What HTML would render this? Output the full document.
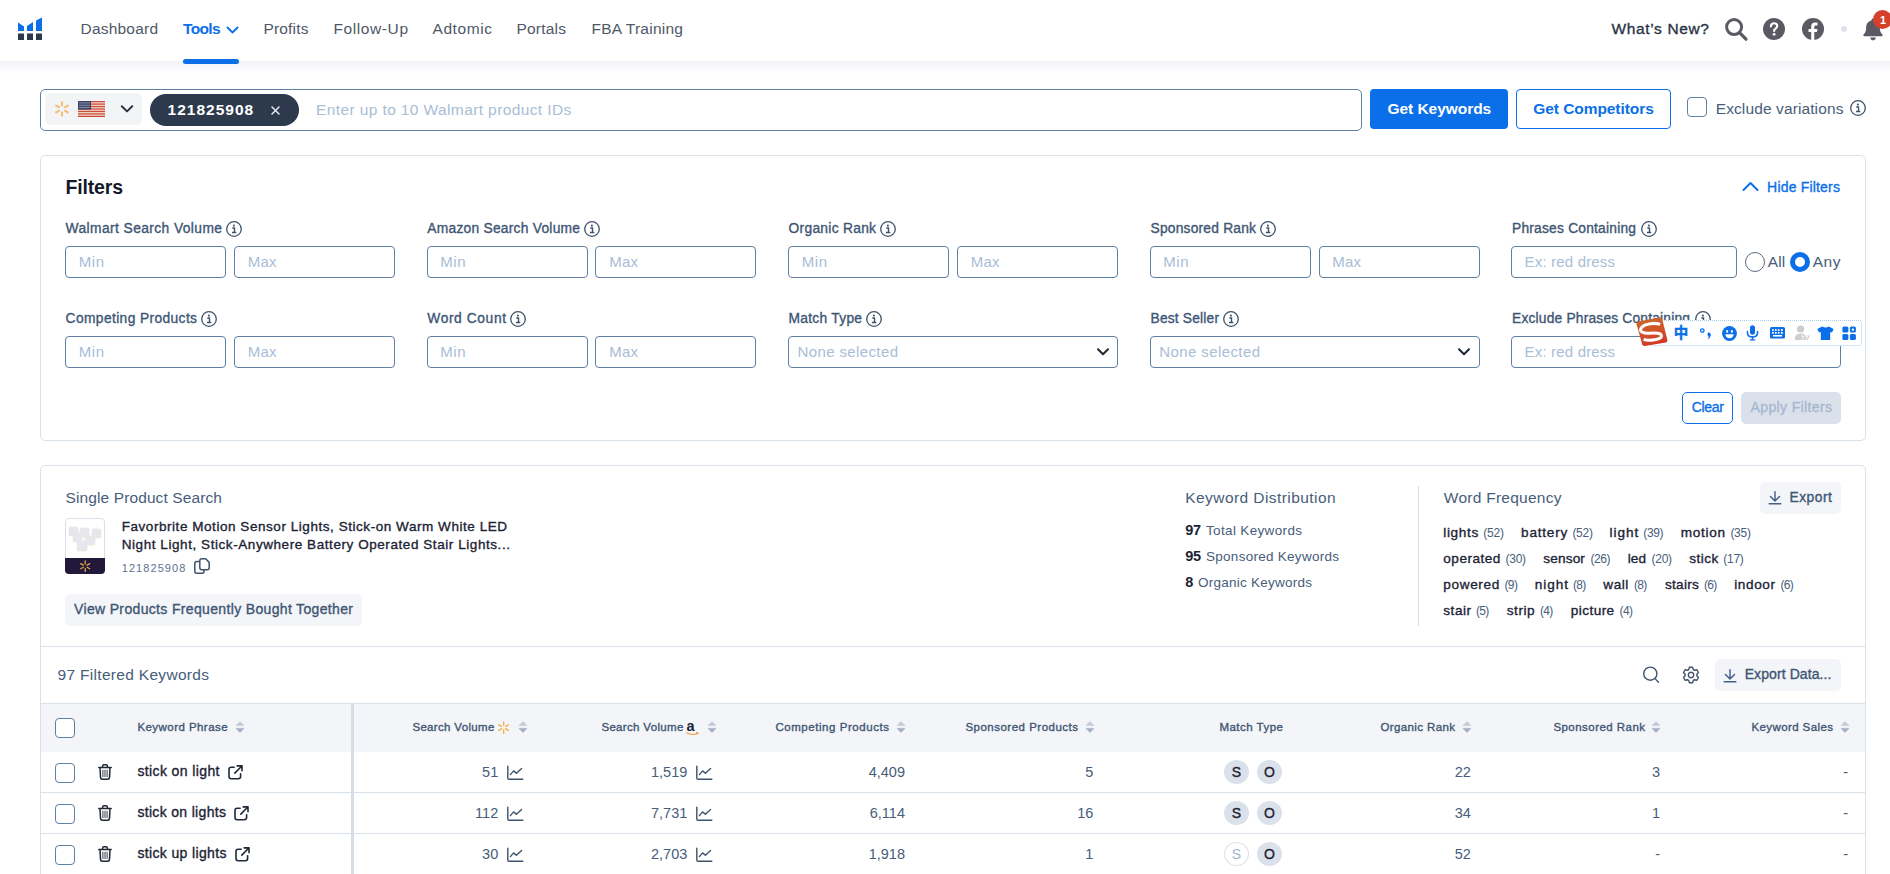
<!DOCTYPE html>
<html lang="en">
<head>
<meta charset="utf-8">
<title>Keyword Research</title>
<style>
html,body{margin:0;padding:0;background:#fff;}
body{width:1890px;height:874px;overflow:hidden;font-family:"Liberation Sans","Noto Sans CJK SC",sans-serif;}
#root{position:relative;width:1890px;height:874px;overflow:hidden;background:#fff;}
#root *{box-sizing:border-box;}
.t{position:absolute;white-space:nowrap;margin:0;padding:0;}
.a{position:absolute;}
.hdr{left:0;top:0;width:1890px;height:61px;background:#fff;}
.card{border:1px solid #d9e1ea;border-radius:5px;background:#fff;}
.inp{border:1px solid #5f7fa3;border-radius:4px;background:#fff;height:32px;}
.cb{border:1px solid #5f7fa3;border-radius:4px;background:#fff;width:20px;height:20px;}
.gbtn{background:#f3f5f8;border-radius:5px;}
.mt{width:25px;height:24px;border-radius:50%;background:#dbe1ea;}
.mto{width:25px;height:24px;border-radius:50%;background:#fff;border:1px solid #dbe1ea;}
.hl{height:1px;background:#d9e1ea;}
svg{position:absolute;overflow:visible;}

</style>
</head>
<body>
<div id="root">
<!-- header -->
<div class="a" style="left:0;top:61px;width:1890px;height:14px;background:linear-gradient(#f1f3f6 0%,#f4f5f8 25%,#fbfbfc 60%,#fff 100%);"></div>
<div class="a hdr"></div>
<div class="a" style="left:183px;top:59px;width:56px;height:5px;border-radius:3px;background:#0a6fe8;"></div>
<!-- logo -->
<svg style="left:18px;top:17px" width="24" height="24" viewBox="0 0 24 24">
 <rect x="0" y="16.5" width="6" height="6.5" fill="#2d3a4e"/>
 <rect x="9" y="16.5" width="6" height="6.5" fill="#2d3a4e"/>
 <rect x="18" y="16.5" width="6" height="6.5" fill="#2d3a4e"/>
 <polygon points="0,5.5 6,9.5 6,14 0,14" fill="#0a6fe8"/>
 <polygon points="9,9 15,5 15,14 9,14" fill="#0a6fe8"/>
 <polygon points="18,3.5 24,0.5 24,14 18,14" fill="#0a6fe8"/>
</svg>
<!-- tools chevron -->
<svg style="left:226.3px;top:25px" width="13" height="10" viewBox="0 0 13 10"><path d="M1.5 2.5 L6.5 7.5 L11.5 2.5" fill="none" stroke="#0a6fe8" stroke-width="1.8" stroke-linecap="round" stroke-linejoin="round"/></svg>
<!-- header right icons -->
<svg style="left:1724px;top:17px" width="26" height="26" viewBox="0 0 26 26"><circle cx="10.1" cy="10.1" r="7.5" fill="none" stroke="#5d5964" stroke-width="3"/><path d="M15.6 15.6 L22 22.2" stroke="#5d5964" stroke-width="3.2" stroke-linecap="round"/></svg>
<svg style="left:1763px;top:18px" width="22" height="22" viewBox="0 0 22 22"><circle cx="11" cy="11" r="11" fill="#5d5964"/><path d="M7.9 8.4 C7.9 6.4 9.3 5.3 11.1 5.3 C12.9 5.3 14.2 6.4 14.2 8 C14.2 9.6 13.2 10.1 12.2 10.9 C11.4 11.5 11.1 12 11.1 13" fill="none" stroke="#fff" stroke-width="2.1" stroke-linecap="round"/><circle cx="11.1" cy="16.3" r="1.4" fill="#fff"/></svg>
<svg style="left:1802px;top:18px" width="22" height="22" viewBox="0 0 22 22"><circle cx="11" cy="11" r="11" fill="#5d5964"/><path d="M12.3 22 V14 H14.9 L15.4 10.9 H12.3 V9 C12.3 8 12.7 7.4 13.9 7.4 H15.5 V4.7 C15 4.6 14.1 4.5 13.2 4.5 C10.6 4.5 9.2 6 9.2 8.6 V10.9 H6.5 V14 H9.2 V22 Z" fill="#fff"/></svg>
<div class="a" style="left:1840.5px;top:26px;width:6px;height:6px;border-radius:50%;background:#dde2ea;"></div>
<svg style="left:1862px;top:18px" width="22" height="23" viewBox="0 0 22 23"><path d="M11 0.5 C11.9 0.5 12.5 1.1 12.5 2 V2.6 C15.8 3.3 17.8 6 17.8 9.4 C17.8 13 18.8 15 20.4 16.5 C21 17.1 20.7 18.3 19.6 18.3 H2.4 C1.3 18.3 1 17.1 1.6 16.5 C3.2 15 4.2 13 4.2 9.4 C4.2 6 6.2 3.3 9.5 2.6 V2 C9.5 1.1 10.1 0.5 11 0.5 Z" fill="#5d5964"/><path d="M8.2 19.6 H13.8 C13.8 21.2 12.6 22.4 11 22.4 C9.4 22.4 8.2 21.2 8.2 19.6 Z" fill="#5d5964"/></svg>
<div class="a" style="left:1873.2px;top:10px;width:19px;height:19px;border-radius:50%;background:#d4402a;"></div>

<!-- search bar -->
<div class="a" style="left:40px;top:89px;width:1322px;height:42px;border:1px solid #5f7fa3;border-radius:5px;background:#fff;"></div>
<div class="a" style="left:45px;top:93px;width:97px;height:32px;border-radius:6px;background:#f3f4f6;"></div>
<svg style="left:53px;top:100px" width="18" height="18" viewBox="-9 -9 18 18"><g stroke="#f6bf78" stroke-width="2.1" stroke-linecap="round"><path d="M0 -6.8V-3.5"/><path d="M0 6.8V3.5"/><path d="M-5.9 -3.4L-3 -1.75"/><path d="M5.9 -3.4L3 -1.75"/><path d="M-5.9 3.4L-3 1.75"/><path d="M5.9 3.4L3 1.75"/></g></svg>
<svg style="left:78px;top:101px" width="27" height="16" viewBox="0 0 27 16"><rect width="27" height="16" fill="#f1e4d4"/><g fill="#cf4a3a"><rect y="0" width="27" height="1.3"/><rect y="2.45" width="27" height="1.3"/><rect y="4.9" width="27" height="1.3"/><rect y="7.35" width="27" height="1.3"/><rect y="9.8" width="27" height="1.3"/><rect y="12.25" width="27" height="1.3"/><rect y="14.7" width="27" height="1.3"/></g><rect width="13" height="8.6" fill="#3c4468"/><g fill="#8d93ad"><rect x="1" y="1.5" width="11" height="0.9"/><rect x="1" y="3.8" width="11" height="0.9"/><rect x="1" y="6.1" width="11" height="0.9"/></g></svg>
<svg style="left:120px;top:104px" width="14" height="10" viewBox="0 0 14 10"><path d="M1.8 2.2 L7 7.4 L12.2 2.2" fill="none" stroke="#2a3342" stroke-width="2" stroke-linecap="round" stroke-linejoin="round"/></svg>
<div class="a" style="left:150px;top:94px;width:149px;height:32px;border-radius:16px;background:#2d3a4e;"></div>
<svg style="left:271px;top:106px" width="9" height="9" viewBox="0 0 9 9"><path d="M1 1 L8 8 M8 1 L1 8" stroke="#e5e9ef" stroke-width="1.5" stroke-linecap="round"/></svg>
<div class="a" style="left:1370px;top:89px;width:138px;height:40px;border-radius:4px;background:#0a6fe8;"></div>
<div class="a" style="left:1516px;top:89px;width:155px;height:40px;border-radius:4px;background:#fff;border:1px solid #0a6fe8;"></div>
<div class="a cb" style="left:1687px;top:97px;"></div>

<!-- filters card -->
<div class="a card" style="left:40px;top:155px;width:1826px;height:286px;"></div>
<svg style="left:1742px;top:181px" width="17" height="11" viewBox="0 0 17 11"><path d="M1.5 9 L8.5 2 L15.5 9" fill="none" stroke="#0a6fe8" stroke-width="2" stroke-linecap="round" stroke-linejoin="round"/></svg>
<!-- row1 inputs -->
<div class="a inp" style="left:65px;top:246px;width:161px;"></div>
<div class="a inp" style="left:234px;top:246px;width:161px;"></div>
<div class="a inp" style="left:426.5px;top:246px;width:161px;"></div>
<div class="a inp" style="left:595px;top:246px;width:161px;"></div>
<div class="a inp" style="left:788px;top:246px;width:161px;"></div>
<div class="a inp" style="left:957px;top:246px;width:161px;"></div>
<div class="a inp" style="left:1149.5px;top:246px;width:161px;"></div>
<div class="a inp" style="left:1318.5px;top:246px;width:161px;"></div>
<div class="a inp" style="left:1511px;top:246px;width:226px;"></div>
<!-- radios -->
<div class="a" style="left:1745px;top:252px;width:20px;height:20px;border-radius:50%;border:1px solid #5c6b7e;background:#fff;"></div>
<div class="a" style="left:1790px;top:252px;width:20px;height:20px;border-radius:50%;border:5.5px solid #0a6fe8;background:#fff;"></div>
<!-- row2 inputs -->
<div class="a inp" style="left:65px;top:336px;width:161px;"></div>
<div class="a inp" style="left:234px;top:336px;width:161px;"></div>
<div class="a inp" style="left:426.5px;top:336px;width:161px;"></div>
<div class="a inp" style="left:595px;top:336px;width:161px;"></div>
<div class="a inp" style="left:788px;top:336px;width:330px;"></div>
<div class="a inp" style="left:1149.5px;top:336px;width:330px;"></div>
<div class="a inp" style="left:1511px;top:336px;width:330px;"></div>
<svg style="left:1096px;top:347px" width="14" height="10" viewBox="0 0 14 10"><path d="M2 2.2 L7 7.2 L12 2.2" fill="none" stroke="#1f2937" stroke-width="2" stroke-linecap="round" stroke-linejoin="round"/></svg>
<svg style="left:1457px;top:347px" width="14" height="10" viewBox="0 0 14 10"><path d="M2 2.2 L7 7.2 L12 2.2" fill="none" stroke="#1f2937" stroke-width="2" stroke-linecap="round" stroke-linejoin="round"/></svg>
<!-- buttons -->
<div class="a" style="left:1682px;top:392px;width:51px;height:32px;border-radius:5px;background:#fff;border:1px solid #0a6fe8;"></div>
<div class="a" style="left:1741px;top:392px;width:100px;height:32px;border-radius:5px;background:#dbe1ea;"></div>

<!-- results card -->
<div class="a card" style="left:40px;top:465px;width:1826px;height:430px;"></div>
<div class="a" style="left:65px;top:518px;width:40px;height:56px;border:1px solid #d9e0e9;border-radius:4px;background:#fff;"></div>
<div class="a" style="left:65px;top:558px;width:40px;height:16px;background:#22183a;border-radius:0 0 4px 4px;"></div>
<div class="a gbtn" style="left:65px;top:594px;width:297px;height:32px;"></div>
<div class="a" style="left:1418px;top:486px;width:1px;height:140px;background:#d9e1ea;"></div>
<div class="a gbtn" style="left:1760px;top:482px;width:81px;height:32px;"></div>
<div class="a hl" style="left:41px;top:646px;width:1824px;"></div>
<div class="a gbtn" style="left:1715px;top:659px;width:126px;height:32px;"></div>
<!-- table -->
<div class="a hl" style="left:41px;top:703px;width:1824px;"></div>
<div class="a" style="left:41px;top:704px;width:1824px;height:48px;background:#f3f5f8;"></div>
<div class="a hl" style="left:41px;top:792px;width:1824px;"></div>
<div class="a hl" style="left:41px;top:833px;width:1824px;"></div>
<div class="a" style="left:351px;top:704px;width:3px;height:170px;background:#d5dde7;"></div>
<div class="a cb" style="left:55px;top:718px;"></div>
<div class="a cb" style="left:55px;top:763px;"></div>
<div class="a cb" style="left:55px;top:804px;"></div>
<div class="a cb" style="left:55px;top:845px;"></div>
<div class="a mt" style="left:1224px;top:760px;"></div>
<div class="a mt" style="left:1257px;top:760px;"></div>
<div class="a mt" style="left:1224px;top:801px;"></div>
<div class="a mt" style="left:1257px;top:801px;"></div>
<div class="a mto" style="left:1224px;top:842px;"></div>
<div class="a mt" style="left:1257px;top:842px;"></div>

<svg style="left:224.8px;top:219.8px" width="18" height="18" viewBox="-9 -9 18 18"><circle r="7.3" fill="none" stroke="#3f526b" stroke-width="1.3"/><circle cx="-0.1" cy="-3.4" r="1.05" fill="#3f526b"/><path d="M-1.7 -1 H0.5 V3.4 M-2 3.5 H2.3" fill="none" stroke="#3f526b" stroke-width="1.4"/></svg>
<svg style="left:583px;top:219.8px" width="18" height="18" viewBox="-9 -9 18 18"><circle r="7.3" fill="none" stroke="#3f526b" stroke-width="1.3"/><circle cx="-0.1" cy="-3.4" r="1.05" fill="#3f526b"/><path d="M-1.7 -1 H0.5 V3.4 M-2 3.5 H2.3" fill="none" stroke="#3f526b" stroke-width="1.4"/></svg>
<svg style="left:879px;top:219.8px" width="18" height="18" viewBox="-9 -9 18 18"><circle r="7.3" fill="none" stroke="#3f526b" stroke-width="1.3"/><circle cx="-0.1" cy="-3.4" r="1.05" fill="#3f526b"/><path d="M-1.7 -1 H0.5 V3.4 M-2 3.5 H2.3" fill="none" stroke="#3f526b" stroke-width="1.4"/></svg>
<svg style="left:1259px;top:219.8px" width="18" height="18" viewBox="-9 -9 18 18"><circle r="7.3" fill="none" stroke="#3f526b" stroke-width="1.3"/><circle cx="-0.1" cy="-3.4" r="1.05" fill="#3f526b"/><path d="M-1.7 -1 H0.5 V3.4 M-2 3.5 H2.3" fill="none" stroke="#3f526b" stroke-width="1.4"/></svg>
<svg style="left:1640px;top:219.8px" width="18" height="18" viewBox="-9 -9 18 18"><circle r="7.3" fill="none" stroke="#3f526b" stroke-width="1.3"/><circle cx="-0.1" cy="-3.4" r="1.05" fill="#3f526b"/><path d="M-1.7 -1 H0.5 V3.4 M-2 3.5 H2.3" fill="none" stroke="#3f526b" stroke-width="1.4"/></svg>
<svg style="left:200px;top:309.8px" width="18" height="18" viewBox="-9 -9 18 18"><circle r="7.3" fill="none" stroke="#3f526b" stroke-width="1.3"/><circle cx="-0.1" cy="-3.4" r="1.05" fill="#3f526b"/><path d="M-1.7 -1 H0.5 V3.4 M-2 3.5 H2.3" fill="none" stroke="#3f526b" stroke-width="1.4"/></svg>
<svg style="left:509px;top:309.8px" width="18" height="18" viewBox="-9 -9 18 18"><circle r="7.3" fill="none" stroke="#3f526b" stroke-width="1.3"/><circle cx="-0.1" cy="-3.4" r="1.05" fill="#3f526b"/><path d="M-1.7 -1 H0.5 V3.4 M-2 3.5 H2.3" fill="none" stroke="#3f526b" stroke-width="1.4"/></svg>
<svg style="left:865px;top:309.8px" width="18" height="18" viewBox="-9 -9 18 18"><circle r="7.3" fill="none" stroke="#3f526b" stroke-width="1.3"/><circle cx="-0.1" cy="-3.4" r="1.05" fill="#3f526b"/><path d="M-1.7 -1 H0.5 V3.4 M-2 3.5 H2.3" fill="none" stroke="#3f526b" stroke-width="1.4"/></svg>
<svg style="left:1222px;top:309.8px" width="18" height="18" viewBox="-9 -9 18 18"><circle r="7.3" fill="none" stroke="#3f526b" stroke-width="1.3"/><circle cx="-0.1" cy="-3.4" r="1.05" fill="#3f526b"/><path d="M-1.7 -1 H0.5 V3.4 M-2 3.5 H2.3" fill="none" stroke="#3f526b" stroke-width="1.4"/></svg>
<svg style="left:1694px;top:309.8px" width="18" height="18" viewBox="-9 -9 18 18"><circle r="7.3" fill="none" stroke="#3f526b" stroke-width="1.3"/><circle cx="-0.1" cy="-3.4" r="1.05" fill="#3f526b"/><path d="M-1.7 -1 H0.5 V3.4 M-2 3.5 H2.3" fill="none" stroke="#3f526b" stroke-width="1.4"/></svg>
<svg style="left:1848.5px;top:99px" width="18" height="18" viewBox="-9 -9 18 18"><circle r="7.3" fill="none" stroke="#3f526b" stroke-width="1.3"/><circle cx="-0.1" cy="-3.4" r="1.05" fill="#3f526b"/><path d="M-1.7 -1 H0.5 V3.4 M-2 3.5 H2.3" fill="none" stroke="#3f526b" stroke-width="1.4"/></svg>
<svg style="left:235px;top:719.6px" width="10" height="14" viewBox="-5 -7 10 14"><path d="M0 -5.6 L3.9 -1.6 H-3.9 Z" fill="#c3cad7" stroke="#c3cad7" stroke-width="0.6" stroke-linejoin="round"/><path d="M0 5.4 L3.9 1.4 H-3.9 Z" fill="#a3aec4" stroke="#a3aec4" stroke-width="0.6" stroke-linejoin="round"/></svg>
<svg style="left:518px;top:719.6px" width="10" height="14" viewBox="-5 -7 10 14"><path d="M0 -5.6 L3.9 -1.6 H-3.9 Z" fill="#c3cad7" stroke="#c3cad7" stroke-width="0.6" stroke-linejoin="round"/><path d="M0 5.4 L3.9 1.4 H-3.9 Z" fill="#a3aec4" stroke="#a3aec4" stroke-width="0.6" stroke-linejoin="round"/></svg>
<svg style="left:707px;top:719.6px" width="10" height="14" viewBox="-5 -7 10 14"><path d="M0 -5.6 L3.9 -1.6 H-3.9 Z" fill="#c3cad7" stroke="#c3cad7" stroke-width="0.6" stroke-linejoin="round"/><path d="M0 5.4 L3.9 1.4 H-3.9 Z" fill="#a3aec4" stroke="#a3aec4" stroke-width="0.6" stroke-linejoin="round"/></svg>
<svg style="left:896px;top:719.6px" width="10" height="14" viewBox="-5 -7 10 14"><path d="M0 -5.6 L3.9 -1.6 H-3.9 Z" fill="#c3cad7" stroke="#c3cad7" stroke-width="0.6" stroke-linejoin="round"/><path d="M0 5.4 L3.9 1.4 H-3.9 Z" fill="#a3aec4" stroke="#a3aec4" stroke-width="0.6" stroke-linejoin="round"/></svg>
<svg style="left:1085px;top:719.6px" width="10" height="14" viewBox="-5 -7 10 14"><path d="M0 -5.6 L3.9 -1.6 H-3.9 Z" fill="#c3cad7" stroke="#c3cad7" stroke-width="0.6" stroke-linejoin="round"/><path d="M0 5.4 L3.9 1.4 H-3.9 Z" fill="#a3aec4" stroke="#a3aec4" stroke-width="0.6" stroke-linejoin="round"/></svg>
<svg style="left:1462px;top:719.6px" width="10" height="14" viewBox="-5 -7 10 14"><path d="M0 -5.6 L3.9 -1.6 H-3.9 Z" fill="#c3cad7" stroke="#c3cad7" stroke-width="0.6" stroke-linejoin="round"/><path d="M0 5.4 L3.9 1.4 H-3.9 Z" fill="#a3aec4" stroke="#a3aec4" stroke-width="0.6" stroke-linejoin="round"/></svg>
<svg style="left:1651px;top:719.6px" width="10" height="14" viewBox="-5 -7 10 14"><path d="M0 -5.6 L3.9 -1.6 H-3.9 Z" fill="#c3cad7" stroke="#c3cad7" stroke-width="0.6" stroke-linejoin="round"/><path d="M0 5.4 L3.9 1.4 H-3.9 Z" fill="#a3aec4" stroke="#a3aec4" stroke-width="0.6" stroke-linejoin="round"/></svg>
<svg style="left:1840px;top:719.6px" width="10" height="14" viewBox="-5 -7 10 14"><path d="M0 -5.6 L3.9 -1.6 H-3.9 Z" fill="#c3cad7" stroke="#c3cad7" stroke-width="0.6" stroke-linejoin="round"/><path d="M0 5.4 L3.9 1.4 H-3.9 Z" fill="#a3aec4" stroke="#a3aec4" stroke-width="0.6" stroke-linejoin="round"/></svg>
<svg style="left:507px;top:765.5px" width="16" height="14" viewBox="0 0 16 14"><path d="M0.8 0.3 V12 Q0.8 13.2 2 13.2 H15.8" fill="none" stroke="#3f526b" stroke-width="1.4" stroke-linecap="round"/><path d="M3.4 8.6 L6.6 4.9 L9.4 7.3 L14.6 2.6" fill="none" stroke="#3f526b" stroke-width="1.4" stroke-linecap="round" stroke-linejoin="round"/></svg>
<svg style="left:696px;top:765.5px" width="16" height="14" viewBox="0 0 16 14"><path d="M0.8 0.3 V12 Q0.8 13.2 2 13.2 H15.8" fill="none" stroke="#3f526b" stroke-width="1.4" stroke-linecap="round"/><path d="M3.4 8.6 L6.6 4.9 L9.4 7.3 L14.6 2.6" fill="none" stroke="#3f526b" stroke-width="1.4" stroke-linecap="round" stroke-linejoin="round"/></svg>
<svg style="left:507px;top:806.5px" width="16" height="14" viewBox="0 0 16 14"><path d="M0.8 0.3 V12 Q0.8 13.2 2 13.2 H15.8" fill="none" stroke="#3f526b" stroke-width="1.4" stroke-linecap="round"/><path d="M3.4 8.6 L6.6 4.9 L9.4 7.3 L14.6 2.6" fill="none" stroke="#3f526b" stroke-width="1.4" stroke-linecap="round" stroke-linejoin="round"/></svg>
<svg style="left:696px;top:806.5px" width="16" height="14" viewBox="0 0 16 14"><path d="M0.8 0.3 V12 Q0.8 13.2 2 13.2 H15.8" fill="none" stroke="#3f526b" stroke-width="1.4" stroke-linecap="round"/><path d="M3.4 8.6 L6.6 4.9 L9.4 7.3 L14.6 2.6" fill="none" stroke="#3f526b" stroke-width="1.4" stroke-linecap="round" stroke-linejoin="round"/></svg>
<svg style="left:507px;top:847.5px" width="16" height="14" viewBox="0 0 16 14"><path d="M0.8 0.3 V12 Q0.8 13.2 2 13.2 H15.8" fill="none" stroke="#3f526b" stroke-width="1.4" stroke-linecap="round"/><path d="M3.4 8.6 L6.6 4.9 L9.4 7.3 L14.6 2.6" fill="none" stroke="#3f526b" stroke-width="1.4" stroke-linecap="round" stroke-linejoin="round"/></svg>
<svg style="left:696px;top:847.5px" width="16" height="14" viewBox="0 0 16 14"><path d="M0.8 0.3 V12 Q0.8 13.2 2 13.2 H15.8" fill="none" stroke="#3f526b" stroke-width="1.4" stroke-linecap="round"/><path d="M3.4 8.6 L6.6 4.9 L9.4 7.3 L14.6 2.6" fill="none" stroke="#3f526b" stroke-width="1.4" stroke-linecap="round" stroke-linejoin="round"/></svg>
<svg style="left:98px;top:764px" width="14" height="16" viewBox="0 0 14 16"><path d="M0.8 3.4 H13.2 M4.6 3.2 V2.2 Q4.6 0.8 6 0.8 H8 Q9.4 0.8 9.4 2.2 V3.2 M2 3.6 L2.5 13.4 Q2.6 15.2 4.4 15.2 H9.6 Q11.4 15.2 11.5 13.4 L12 3.6" fill="none" stroke="#1f2937" stroke-width="1.5" stroke-linecap="round" stroke-linejoin="round"/><path d="M4.9 6.2 V12.6 M7 6.2 V12.6 M9.1 6.2 V12.6" stroke="#1f2937" stroke-width="0.9" stroke-linecap="round"/></svg>
<svg style="left:98px;top:805px" width="14" height="16" viewBox="0 0 14 16"><path d="M0.8 3.4 H13.2 M4.6 3.2 V2.2 Q4.6 0.8 6 0.8 H8 Q9.4 0.8 9.4 2.2 V3.2 M2 3.6 L2.5 13.4 Q2.6 15.2 4.4 15.2 H9.6 Q11.4 15.2 11.5 13.4 L12 3.6" fill="none" stroke="#1f2937" stroke-width="1.5" stroke-linecap="round" stroke-linejoin="round"/><path d="M4.9 6.2 V12.6 M7 6.2 V12.6 M9.1 6.2 V12.6" stroke="#1f2937" stroke-width="0.9" stroke-linecap="round"/></svg>
<svg style="left:98px;top:846px" width="14" height="16" viewBox="0 0 14 16"><path d="M0.8 3.4 H13.2 M4.6 3.2 V2.2 Q4.6 0.8 6 0.8 H8 Q9.4 0.8 9.4 2.2 V3.2 M2 3.6 L2.5 13.4 Q2.6 15.2 4.4 15.2 H9.6 Q11.4 15.2 11.5 13.4 L12 3.6" fill="none" stroke="#1f2937" stroke-width="1.5" stroke-linecap="round" stroke-linejoin="round"/><path d="M4.9 6.2 V12.6 M7 6.2 V12.6 M9.1 6.2 V12.6" stroke="#1f2937" stroke-width="0.9" stroke-linecap="round"/></svg>
<svg style="left:227.5px;top:764.5px" width="15" height="15" viewBox="0 0 15 15"><path d="M6.2 2.2 H3.2 Q1 2.2 1 4.4 V11.6 Q1 13.8 3.2 13.8 H10.4 Q12.6 13.8 12.6 11.6 V8.8" fill="none" stroke="#1f2937" stroke-width="1.6" stroke-linecap="round"/><path d="M9.2 0.9 H14 V5.7 M13.6 1.3 L6.8 8.1" fill="none" stroke="#1f2937" stroke-width="1.6" stroke-linecap="round" stroke-linejoin="round"/></svg>
<svg style="left:233.5px;top:805.5px" width="15" height="15" viewBox="0 0 15 15"><path d="M6.2 2.2 H3.2 Q1 2.2 1 4.4 V11.6 Q1 13.8 3.2 13.8 H10.4 Q12.6 13.8 12.6 11.6 V8.8" fill="none" stroke="#1f2937" stroke-width="1.6" stroke-linecap="round"/><path d="M9.2 0.9 H14 V5.7 M13.6 1.3 L6.8 8.1" fill="none" stroke="#1f2937" stroke-width="1.6" stroke-linecap="round" stroke-linejoin="round"/></svg>
<svg style="left:234.5px;top:846.5px" width="15" height="15" viewBox="0 0 15 15"><path d="M6.2 2.2 H3.2 Q1 2.2 1 4.4 V11.6 Q1 13.8 3.2 13.8 H10.4 Q12.6 13.8 12.6 11.6 V8.8" fill="none" stroke="#1f2937" stroke-width="1.6" stroke-linecap="round"/><path d="M9.2 0.9 H14 V5.7 M13.6 1.3 L6.8 8.1" fill="none" stroke="#1f2937" stroke-width="1.6" stroke-linecap="round" stroke-linejoin="round"/></svg>
<svg style="left:1723px;top:667.8px" width="14" height="15" viewBox="0 0 14 15"><path d="M7 1.6 V10.6 M2.5 6.4 L7 11 L11.5 6.4 M1.2 13.8 H12.8" fill="none" stroke="#45608a" stroke-width="1.45" stroke-linecap="round" stroke-linejoin="round"/></svg>
<svg style="left:1768px;top:490.4px" width="14" height="15" viewBox="0 0 14 15"><path d="M7 1.6 V10.6 M2.5 6.4 L7 11 L11.5 6.4 M1.2 13.8 H12.8" fill="none" stroke="#45608a" stroke-width="1.45" stroke-linecap="round" stroke-linejoin="round"/></svg>
<svg style="left:1642px;top:665px" width="18" height="19" viewBox="0 0 18 19"><circle cx="8.3" cy="8.7" r="6.6" fill="none" stroke="#3f526b" stroke-width="1.4"/><path d="M13.1 13.6 L16.5 17.3" stroke="#3f526b" stroke-width="1.4" stroke-linecap="round"/></svg>
<svg style="left:1681.9px;top:665.8px" width="18" height="18" viewBox="-9 -9 18 18"><path d="M-1.57 -7.74 L1.57 -7.74 L2.30 -5.43 L3.56 -4.71 L5.92 -5.23 L7.49 -2.51 L5.85 -0.73 L5.85 0.73 L7.49 2.51 L5.92 5.23 L3.56 4.71 L2.30 5.43 L1.57 7.74 L-1.57 7.74 L-2.30 5.43 L-3.56 4.71 L-5.92 5.23 L-7.49 2.51 L-5.85 0.73 L-5.85 -0.73 L-7.49 -2.51 L-5.92 -5.23 L-3.56 -4.71 L-2.30 -5.43 Z" fill="none" stroke="#3f526b" stroke-width="1.4" stroke-linejoin="round"/><circle r="2.7" fill="none" stroke="#3f526b" stroke-width="1.4"/></svg>
<svg style="left:194px;top:558px" width="16" height="16" viewBox="0 0 16 16"><path d="M4.6 3.6 H2.8 Q0.8 3.6 0.8 5.6 V13.2 Q0.8 15.2 2.8 15.2 H8 Q10 15.2 10 13.2 V12.4" fill="none" stroke="#3f526b" stroke-width="1.5" stroke-linecap="round"/><path d="M7.8 0.8 H11.6 L15.2 4.4 V9.8 Q15.2 11.8 13.2 11.8 H7.8 Q5.8 11.8 5.8 9.8 V2.8 Q5.8 0.8 7.8 0.8 Z" fill="none" stroke="#3f526b" stroke-width="1.5" stroke-linejoin="round"/></svg>
<svg style="left:496.59999999999997px;top:721.1999999999999px" width="13.2" height="13.2" viewBox="-6.6 -6.6 13.2 13.2"><path d="M0.00 -2.35L0.00 -5.60M2.04 -1.18L4.85 -2.80M2.04 1.18L4.85 2.80M0.00 2.35L0.00 5.60M-2.04 1.18L-4.85 2.80M-2.04 -1.18L-4.85 -2.80" stroke="#f7b457" stroke-width="1.5" stroke-linecap="round" fill="none"/></svg>
<svg style="left:78.8px;top:559.8px" width="12.4" height="12.4" viewBox="-6.2 -6.2 12.4 12.4"><path d="M0.00 -2.18L0.00 -5.20M1.89 -1.09L4.50 -2.60M1.89 1.09L4.50 2.60M0.00 2.18L0.00 5.20M-1.89 1.09L-4.50 2.60M-1.89 -1.09L-4.50 -2.60" stroke="#e3a552" stroke-width="1.3" stroke-linecap="round" fill="none"/></svg>
<svg style="left:686px;top:732px" width="13" height="4" viewBox="0 0 13 4"><path d="M0.8 0.8 Q6 4 11.6 1.2" fill="none" stroke="#f29b38" stroke-width="1.1" stroke-linecap="round"/><path d="M10.4 0.6 L12.2 0.8 L11.4 2.4" fill="none" stroke="#f29b38" stroke-width="0.9" stroke-linecap="round"/></svg>
<svg style="left:67px;top:525px" width="36" height="28" viewBox="0 0 36 28"><g fill="#e4e8ee" stroke="#f1e6d8" stroke-width="0.8"><rect x="2" y="2" width="9" height="9" rx="1.5"/><rect x="13" y="3" width="9" height="9" rx="1.5"/><rect x="25" y="4" width="9" height="9" rx="1.5"/><rect x="6" y="8" width="9" height="9" rx="1.5"/><rect x="18" y="11" width="10" height="9" rx="1.5"/><rect x="10" y="16" width="10" height="10" rx="1.5"/></g></svg>
<span class="t" style="top:19.00px;height:19px;line-height:19px;font-size:15.5px;color:#4f5867;letter-spacing:0.209px;left:80.5px;">Dashboard</span>
<span class="t" style="top:19.00px;height:19px;line-height:19px;font-size:15.5px;color:#0a6fe8;font-weight:700;letter-spacing:-0.672px;left:183.1px;">Tools</span>
<span class="t" style="top:19.00px;height:19px;line-height:19px;font-size:15.5px;color:#4f5867;letter-spacing:0.160px;left:263.5px;">Profits</span>
<span class="t" style="top:19.00px;height:19px;line-height:19px;font-size:15.5px;color:#4f5867;letter-spacing:0.592px;left:333.5px;">Follow-Up</span>
<span class="t" style="top:19.00px;height:19px;line-height:19px;font-size:15.5px;color:#4f5867;letter-spacing:0.583px;left:432.5px;">Adtomic</span>
<span class="t" style="top:19.00px;height:19px;line-height:19px;font-size:15.5px;color:#4f5867;letter-spacing:0.208px;left:516.5px;">Portals</span>
<span class="t" style="top:19.00px;height:19px;line-height:19px;font-size:15.5px;color:#4f5867;letter-spacing:0.250px;left:591.5px;">FBA Training</span>
<span class="t" style="top:19.00px;height:19px;line-height:19px;font-size:15.5px;color:#2a3446;-webkit-text-stroke:0.35px;letter-spacing:0.647px;left:1611.5px;">What’s New?</span>
<span class="t" style="top:13.00px;height:14px;line-height:14px;font-size:11px;color:#fff;font-weight:700;left:1880px;">1</span>
<span class="t" style="top:100.00px;height:19px;line-height:19px;font-size:15.5px;color:#fff;font-weight:700;letter-spacing:1.013px;left:167.5px;">121825908</span>
<span class="t" style="top:100.00px;height:19px;line-height:19px;font-size:15.5px;color:#a8bdd6;letter-spacing:0.392px;left:316px;">Enter up to 10 Walmart product IDs</span>
<span class="t" style="top:99.00px;height:19px;line-height:19px;font-size:15.5px;color:#fff;font-weight:700;letter-spacing:-0.049px;left:1387.5px;">Get Keywords</span>
<span class="t" style="top:99.00px;height:19px;line-height:19px;font-size:15.5px;color:#0a6fe8;font-weight:700;letter-spacing:-0.067px;left:1533.3px;">Get Competitors</span>
<span class="t" style="top:99.00px;height:19px;line-height:19px;font-size:15.5px;color:#475d7a;letter-spacing:0.112px;left:1715.7px;">Exclude variations</span>
<span class="t" style="top:175.00px;height:24px;line-height:24px;font-size:19.5px;color:#141a2b;font-weight:700;letter-spacing:-0.172px;left:65.5px;">Filters</span>
<span class="t" style="top:178.00px;height:18px;line-height:18px;font-size:14px;color:#0a6fe8;-webkit-text-stroke:0.35px;letter-spacing:0.182px;left:1767.1px;">Hide Filters</span>
<span class="t" style="top:220.00px;height:17px;line-height:17px;font-size:13.8px;color:#3e5674;-webkit-text-stroke:0.35px;letter-spacing:0.408px;left:65.6px;">Walmart Search Volume</span>
<span class="t" style="top:220.00px;height:17px;line-height:17px;font-size:13.8px;color:#3e5674;-webkit-text-stroke:0.35px;letter-spacing:0.247px;left:427.3px;">Amazon Search Volume</span>
<span class="t" style="top:220.00px;height:17px;line-height:17px;font-size:13.8px;color:#3e5674;-webkit-text-stroke:0.35px;letter-spacing:0.276px;left:788.6px;">Organic Rank</span>
<span class="t" style="top:220.00px;height:17px;line-height:17px;font-size:13.8px;color:#3e5674;-webkit-text-stroke:0.35px;letter-spacing:0.209px;left:1150.5px;">Sponsored Rank</span>
<span class="t" style="top:220.00px;height:17px;line-height:17px;font-size:13.8px;color:#3e5674;-webkit-text-stroke:0.35px;letter-spacing:0.210px;left:1512px;">Phrases Containing</span>
<span class="t" style="top:310.00px;height:17px;line-height:17px;font-size:13.8px;color:#3e5674;-webkit-text-stroke:0.35px;letter-spacing:0.376px;left:65.6px;">Competing Products</span>
<span class="t" style="top:310.00px;height:17px;line-height:17px;font-size:13.8px;color:#3e5674;-webkit-text-stroke:0.35px;letter-spacing:0.592px;left:427.3px;">Word Count</span>
<span class="t" style="top:310.00px;height:17px;line-height:17px;font-size:13.8px;color:#3e5674;-webkit-text-stroke:0.35px;letter-spacing:0.258px;left:788.6px;">Match Type</span>
<span class="t" style="top:310.00px;height:17px;line-height:17px;font-size:13.8px;color:#3e5674;-webkit-text-stroke:0.35px;letter-spacing:0.178px;left:1150.5px;">Best Seller</span>
<span class="t" style="top:310.00px;height:17px;line-height:17px;font-size:13.8px;color:#3e5674;-webkit-text-stroke:0.35px;letter-spacing:0.186px;left:1512px;">Exclude Phrases Containing</span>
<span class="t" style="top:252.00px;height:19px;line-height:19px;font-size:15px;color:#a8bdd6;letter-spacing:0.514px;left:78.8px;">Min</span>
<span class="t" style="top:252.00px;height:19px;line-height:19px;font-size:15px;color:#a8bdd6;letter-spacing:0.128px;left:247.8px;">Max</span>
<span class="t" style="top:252.00px;height:19px;line-height:19px;font-size:15px;color:#a8bdd6;letter-spacing:0.514px;left:440.3px;">Min</span>
<span class="t" style="top:252.00px;height:19px;line-height:19px;font-size:15px;color:#a8bdd6;letter-spacing:0.128px;left:609.3px;">Max</span>
<span class="t" style="top:252.00px;height:19px;line-height:19px;font-size:15px;color:#a8bdd6;letter-spacing:0.514px;left:801.8px;">Min</span>
<span class="t" style="top:252.00px;height:19px;line-height:19px;font-size:15px;color:#a8bdd6;letter-spacing:0.128px;left:970.8px;">Max</span>
<span class="t" style="top:252.00px;height:19px;line-height:19px;font-size:15px;color:#a8bdd6;letter-spacing:0.514px;left:1163.3px;">Min</span>
<span class="t" style="top:252.00px;height:19px;line-height:19px;font-size:15px;color:#a8bdd6;letter-spacing:0.128px;left:1332.3px;">Max</span>
<span class="t" style="top:342.00px;height:19px;line-height:19px;font-size:15px;color:#a8bdd6;letter-spacing:0.514px;left:78.8px;">Min</span>
<span class="t" style="top:342.00px;height:19px;line-height:19px;font-size:15px;color:#a8bdd6;letter-spacing:0.128px;left:247.8px;">Max</span>
<span class="t" style="top:342.00px;height:19px;line-height:19px;font-size:15px;color:#a8bdd6;letter-spacing:0.514px;left:440.3px;">Min</span>
<span class="t" style="top:342.00px;height:19px;line-height:19px;font-size:15px;color:#a8bdd6;letter-spacing:0.128px;left:609.3px;">Max</span>
<span class="t" style="top:342.00px;height:19px;line-height:19px;font-size:15px;color:#a8bdd6;letter-spacing:0.383px;left:797.5px;">None selected</span>
<span class="t" style="top:342.00px;height:19px;line-height:19px;font-size:15px;color:#a8bdd6;letter-spacing:0.399px;left:1159.3px;">None selected</span>
<span class="t" style="top:252.00px;height:19px;line-height:19px;font-size:15px;color:#a8bdd6;letter-spacing:0.169px;left:1524.6px;">Ex: red dress</span>
<span class="t" style="top:342.00px;height:19px;line-height:19px;font-size:15px;color:#a8bdd6;letter-spacing:0.169px;left:1524.6px;">Ex: red dress</span>
<span class="t" style="top:252.00px;height:19px;line-height:19px;font-size:15.5px;color:#475d7a;letter-spacing:0.133px;left:1767.8px;">All</span>
<span class="t" style="top:252.00px;height:19px;line-height:19px;font-size:15.5px;color:#475d7a;letter-spacing:0.591px;left:1812.7px;">Any</span>
<span class="t" style="top:398.00px;height:18px;line-height:18px;font-size:14px;color:#0a6fe8;-webkit-text-stroke:0.35px;letter-spacing:-0.292px;left:1691.7px;">Clear</span>
<span class="t" style="top:398.00px;height:18px;line-height:18px;font-size:14px;color:#a7b8d0;-webkit-text-stroke:0.35px;letter-spacing:0.364px;left:1750.6px;">Apply Filters</span>
<span class="t" style="top:488.00px;height:19px;line-height:19px;font-size:15.5px;color:#475d7a;letter-spacing:0.113px;left:65.5px;">Single Product Search</span>
<span class="t" style="top:518.00px;height:17px;line-height:17px;font-size:13.5px;color:#1c2335;-webkit-text-stroke:0.35px;letter-spacing:0.549px;left:121.7px;">Favorbrite Motion Sensor Lights, Stick-on Warm White LED</span>
<span class="t" style="top:536.00px;height:17px;line-height:17px;font-size:13.5px;color:#1c2335;-webkit-text-stroke:0.35px;letter-spacing:0.566px;left:121.7px;">Night Light, Stick-Anywhere Battery Operated Stair Lights...</span>
<span class="t" style="top:561.00px;height:14px;line-height:14px;font-size:11px;color:#5d7290;letter-spacing:1.080px;left:121.7px;">121825908</span>
<span class="t" style="top:600.00px;height:18px;line-height:18px;font-size:14px;color:#3e5674;-webkit-text-stroke:0.35px;letter-spacing:0.342px;left:74px;">View Products Frequently Bought Together</span>
<span class="t" style="top:488.00px;height:19px;line-height:19px;font-size:15.5px;color:#475d7a;letter-spacing:0.429px;left:1185.3px;">Keyword Distribution</span>
<span class="t" style="top:521.00px;height:18px;line-height:18px;font-size:14.5px;color:#1c2335;font-weight:700;letter-spacing:-0.441px;left:1185.3px;">97</span>
<span class="t" style="top:522.00px;height:17px;line-height:17px;font-size:13.5px;color:#475d7a;letter-spacing:0.343px;left:1206px;">Total Keywords</span>
<span class="t" style="top:547.00px;height:18px;line-height:18px;font-size:14.5px;color:#1c2335;font-weight:700;letter-spacing:-0.441px;left:1185.3px;">95</span>
<span class="t" style="top:548.00px;height:17px;line-height:17px;font-size:13.5px;color:#475d7a;letter-spacing:0.275px;left:1206px;">Sponsored Keywords</span>
<span class="t" style="top:573.00px;height:18px;line-height:18px;font-size:14.5px;color:#1c2335;font-weight:700;left:1185.3px;">8</span>
<span class="t" style="top:574.00px;height:17px;line-height:17px;font-size:13.5px;color:#475d7a;letter-spacing:0.247px;left:1198px;">Organic Keywords</span>
<span class="t" style="top:488.00px;height:19px;line-height:19px;font-size:15.5px;color:#475d7a;letter-spacing:0.262px;left:1443.8px;">Word Frequency</span>
<span class="t" style="top:489.00px;height:17px;line-height:17px;font-size:13.8px;color:#3e5674;-webkit-text-stroke:0.35px;letter-spacing:0.465px;left:1789.6px;">Export</span>
<span class="t" style="top:524.00px;height:17px;line-height:17px;font-size:13.6px;color:#1c2335;-webkit-text-stroke:0.35px;letter-spacing:0.633px;left:1443.3px;">lights</span>
<span class="t" style="top:526.00px;height:15px;line-height:15px;font-size:12px;color:#475d7a;letter-spacing:-0.215px;left:1483.3px;">(52)</span>
<span class="t" style="top:524.00px;height:17px;line-height:17px;font-size:13.6px;color:#1c2335;-webkit-text-stroke:0.35px;letter-spacing:0.773px;left:1521.1px;">battery</span>
<span class="t" style="top:526.00px;height:15px;line-height:15px;font-size:12px;color:#475d7a;letter-spacing:-0.281px;left:1572.4px;">(52)</span>
<span class="t" style="top:524.00px;height:17px;line-height:17px;font-size:13.6px;color:#1c2335;-webkit-text-stroke:0.35px;letter-spacing:0.916px;left:1609.6px;">light</span>
<span class="t" style="top:526.00px;height:15px;line-height:15px;font-size:12px;color:#475d7a;letter-spacing:-0.348px;left:1643.3px;">(39)</span>
<span class="t" style="top:524.00px;height:17px;line-height:17px;font-size:13.6px;color:#1c2335;-webkit-text-stroke:0.35px;letter-spacing:0.717px;left:1680.7px;">motion</span>
<span class="t" style="top:526.00px;height:15px;line-height:15px;font-size:12px;color:#475d7a;letter-spacing:-0.281px;left:1730.4px;">(35)</span>
<span class="t" style="top:550.00px;height:17px;line-height:17px;font-size:13.6px;color:#1c2335;-webkit-text-stroke:0.35px;letter-spacing:0.490px;left:1443.3px;">operated</span>
<span class="t" style="top:552.00px;height:15px;line-height:15px;font-size:12px;color:#475d7a;letter-spacing:-0.315px;left:1505.6px;">(30)</span>
<span class="t" style="top:550.00px;height:17px;line-height:17px;font-size:13.6px;color:#1c2335;-webkit-text-stroke:0.35px;letter-spacing:0.158px;left:1543.3px;">sensor</span>
<span class="t" style="top:552.00px;height:15px;line-height:15px;font-size:12px;color:#475d7a;letter-spacing:-0.448px;left:1590.4px;">(26)</span>
<span class="t" style="top:550.00px;height:17px;line-height:17px;font-size:13.6px;color:#1c2335;-webkit-text-stroke:0.35px;letter-spacing:0.030px;left:1627.8px;">led</span>
<span class="t" style="top:552.00px;height:15px;line-height:15px;font-size:12px;color:#475d7a;letter-spacing:-0.315px;left:1651.6px;">(20)</span>
<span class="t" style="top:550.00px;height:17px;line-height:17px;font-size:13.6px;color:#1c2335;-webkit-text-stroke:0.35px;letter-spacing:0.428px;left:1689.3px;">stick</span>
<span class="t" style="top:552.00px;height:15px;line-height:15px;font-size:12px;color:#475d7a;letter-spacing:-0.281px;left:1723.3px;">(17)</span>
<span class="t" style="top:576.00px;height:17px;line-height:17px;font-size:13.6px;color:#1c2335;-webkit-text-stroke:0.35px;letter-spacing:0.641px;left:1443.3px;">powered</span>
<span class="t" style="top:578.00px;height:15px;line-height:15px;font-size:12px;color:#475d7a;letter-spacing:-0.536px;left:1504.4px;">(9)</span>
<span class="t" style="top:576.00px;height:17px;line-height:17px;font-size:13.6px;color:#1c2335;-webkit-text-stroke:0.35px;letter-spacing:0.954px;left:1534.7px;">night</span>
<span class="t" style="top:578.00px;height:15px;line-height:15px;font-size:12px;color:#475d7a;letter-spacing:-0.686px;left:1572.9px;">(8)</span>
<span class="t" style="top:576.00px;height:17px;line-height:17px;font-size:13.6px;color:#1c2335;-webkit-text-stroke:0.35px;letter-spacing:0.559px;left:1603.3px;">wall</span>
<span class="t" style="top:578.00px;height:15px;line-height:15px;font-size:12px;color:#475d7a;letter-spacing:-0.686px;left:1634px;">(8)</span>
<span class="t" style="top:576.00px;height:17px;line-height:17px;font-size:13.6px;color:#1c2335;-webkit-text-stroke:0.35px;letter-spacing:0.303px;left:1664.9px;">stairs</span>
<span class="t" style="top:578.00px;height:15px;line-height:15px;font-size:12px;color:#475d7a;letter-spacing:-0.686px;left:1704px;">(6)</span>
<span class="t" style="top:576.00px;height:17px;line-height:17px;font-size:13.6px;color:#1c2335;-webkit-text-stroke:0.35px;letter-spacing:0.621px;left:1734.2px;">indoor</span>
<span class="t" style="top:578.00px;height:15px;line-height:15px;font-size:12px;color:#475d7a;letter-spacing:-0.636px;left:1780.4px;">(6)</span>
<span class="t" style="top:602.00px;height:17px;line-height:17px;font-size:13.6px;color:#1c2335;-webkit-text-stroke:0.35px;letter-spacing:0.528px;left:1443.3px;">stair</span>
<span class="t" style="top:604.00px;height:15px;line-height:15px;font-size:12px;color:#475d7a;letter-spacing:-0.686px;left:1476px;">(5)</span>
<span class="t" style="top:602.00px;height:17px;line-height:17px;font-size:13.6px;color:#1c2335;-webkit-text-stroke:0.35px;letter-spacing:0.578px;left:1506.7px;">strip</span>
<span class="t" style="top:604.00px;height:15px;line-height:15px;font-size:12px;color:#475d7a;letter-spacing:-0.686px;left:1540px;">(4)</span>
<span class="t" style="top:602.00px;height:17px;line-height:17px;font-size:13.6px;color:#1c2335;-webkit-text-stroke:0.35px;letter-spacing:0.448px;left:1570.7px;">picture</span>
<span class="t" style="top:604.00px;height:15px;line-height:15px;font-size:12px;color:#475d7a;letter-spacing:-0.686px;left:1619.6px;">(4)</span>
<span class="t" style="top:665.00px;height:19px;line-height:19px;font-size:15.5px;color:#475d7a;letter-spacing:0.311px;left:57.5px;">97 Filtered Keywords</span>
<span class="t" style="top:665.00px;height:18px;line-height:18px;font-size:14px;color:#3e5674;-webkit-text-stroke:0.35px;letter-spacing:0.085px;left:1744.7px;">Export Data...</span>
<span class="t" style="top:720.00px;height:14px;line-height:14px;font-size:11.5px;color:#3f5675;-webkit-text-stroke:0.35px;letter-spacing:0.448px;left:137.4px;">Keyword Phrase</span>
<span class="t" style="top:720.00px;height:14px;line-height:14px;font-size:11.5px;color:#3f5675;-webkit-text-stroke:0.35px;letter-spacing:0.325px;left:412.4px;">Search Volume</span>
<span class="t" style="top:720.00px;height:14px;line-height:14px;font-size:11.5px;color:#3f5675;-webkit-text-stroke:0.35px;letter-spacing:0.325px;left:601.4px;">Search Volume</span>
<span class="t" style="top:720.00px;height:14px;line-height:14px;font-size:11.5px;color:#3f5675;-webkit-text-stroke:0.35px;letter-spacing:0.553px;left:775.4px;">Competing Products</span>
<span class="t" style="top:720.00px;height:14px;line-height:14px;font-size:11.5px;color:#3f5675;-webkit-text-stroke:0.35px;letter-spacing:0.494px;left:965.4px;">Sponsored Products</span>
<span class="t" style="top:720.00px;height:14px;line-height:14px;font-size:11.5px;color:#3f5675;-webkit-text-stroke:0.35px;letter-spacing:0.483px;left:1219.4px;">Match Type</span>
<span class="t" style="top:720.00px;height:14px;line-height:14px;font-size:11.5px;color:#3f5675;-webkit-text-stroke:0.35px;letter-spacing:0.390px;left:1380.4px;">Organic Rank</span>
<span class="t" style="top:720.00px;height:14px;line-height:14px;font-size:11.5px;color:#3f5675;-webkit-text-stroke:0.35px;letter-spacing:0.456px;left:1553.4px;">Sponsored Rank</span>
<span class="t" style="top:720.00px;height:14px;line-height:14px;font-size:11.5px;color:#3f5675;-webkit-text-stroke:0.35px;letter-spacing:0.407px;left:1751.4px;">Keyword Sales</span>
<span class="t" style="top:717.00px;height:18px;line-height:18px;font-size:14.5px;color:#1c2335;font-weight:700;left:686.5px;">a</span>
<span class="t" style="top:762.00px;height:18px;line-height:18px;font-size:14px;color:#1c2335;-webkit-text-stroke:0.35px;letter-spacing:0.389px;left:137.4px;">stick on light</span>
<span class="t" style="top:763.00px;height:18px;line-height:18px;font-size:14.5px;color:#475d7a;right:1391.800px;">51</span>
<span class="t" style="top:763.00px;height:18px;line-height:18px;font-size:14.5px;color:#475d7a;right:1202.700px;">1,519</span>
<span class="t" style="top:763.00px;height:18px;line-height:18px;font-size:14.5px;color:#475d7a;right:985.000px;">4,409</span>
<span class="t" style="top:763.00px;height:18px;line-height:18px;font-size:14.5px;color:#475d7a;right:796.700px;">5</span>
<span class="t" style="top:763.00px;height:18px;line-height:18px;font-size:14.5px;color:#475d7a;right:419.200px;">22</span>
<span class="t" style="top:763.00px;height:18px;line-height:18px;font-size:14.5px;color:#475d7a;right:230.000px;">3</span>
<span class="t" style="top:763.00px;height:18px;line-height:18px;font-size:14.5px;color:#475d7a;right:42.000px;">-</span>
<span class="t" style="top:763.00px;height:18px;line-height:18px;font-size:14px;color:#1c2335;-webkit-text-stroke:0.35px;left:Nonepx;left:1224px;width:25px;text-align:center;">S</span>
<span class="t" style="top:763.00px;height:18px;line-height:18px;font-size:14px;color:#1c2335;-webkit-text-stroke:0.35px;left:Nonepx;left:1257px;width:25px;text-align:center;">O</span>
<span class="t" style="top:803.00px;height:18px;line-height:18px;font-size:14px;color:#1c2335;-webkit-text-stroke:0.35px;letter-spacing:0.325px;left:137.4px;">stick on lights</span>
<span class="t" style="top:804.00px;height:18px;line-height:18px;font-size:14.5px;color:#475d7a;right:1391.800px;">112</span>
<span class="t" style="top:804.00px;height:18px;line-height:18px;font-size:14.5px;color:#475d7a;right:1202.700px;">7,731</span>
<span class="t" style="top:804.00px;height:18px;line-height:18px;font-size:14.5px;color:#475d7a;right:985.000px;">6,114</span>
<span class="t" style="top:804.00px;height:18px;line-height:18px;font-size:14.5px;color:#475d7a;right:796.700px;">16</span>
<span class="t" style="top:804.00px;height:18px;line-height:18px;font-size:14.5px;color:#475d7a;right:419.200px;">34</span>
<span class="t" style="top:804.00px;height:18px;line-height:18px;font-size:14.5px;color:#475d7a;right:230.000px;">1</span>
<span class="t" style="top:804.00px;height:18px;line-height:18px;font-size:14.5px;color:#475d7a;right:42.000px;">-</span>
<span class="t" style="top:804.00px;height:18px;line-height:18px;font-size:14px;color:#1c2335;-webkit-text-stroke:0.35px;left:Nonepx;left:1224px;width:25px;text-align:center;">S</span>
<span class="t" style="top:804.00px;height:18px;line-height:18px;font-size:14px;color:#1c2335;-webkit-text-stroke:0.35px;left:Nonepx;left:1257px;width:25px;text-align:center;">O</span>
<span class="t" style="top:844.00px;height:18px;line-height:18px;font-size:14px;color:#1c2335;-webkit-text-stroke:0.35px;letter-spacing:0.361px;left:137.4px;">stick up lights</span>
<span class="t" style="top:845.00px;height:18px;line-height:18px;font-size:14.5px;color:#475d7a;right:1391.800px;">30</span>
<span class="t" style="top:845.00px;height:18px;line-height:18px;font-size:14.5px;color:#475d7a;right:1202.700px;">2,703</span>
<span class="t" style="top:845.00px;height:18px;line-height:18px;font-size:14.5px;color:#475d7a;right:985.000px;">1,918</span>
<span class="t" style="top:845.00px;height:18px;line-height:18px;font-size:14.5px;color:#475d7a;right:796.700px;">1</span>
<span class="t" style="top:845.00px;height:18px;line-height:18px;font-size:14.5px;color:#475d7a;right:419.200px;">52</span>
<span class="t" style="top:845.00px;height:18px;line-height:18px;font-size:14.5px;color:#475d7a;right:230.000px;">-</span>
<span class="t" style="top:845.00px;height:18px;line-height:18px;font-size:14.5px;color:#475d7a;right:42.000px;">-</span>
<span class="t" style="top:845.00px;height:18px;line-height:18px;font-size:14px;color:#9fb3cc;left:Nonepx;left:1224px;width:25px;text-align:center;">S</span>
<span class="t" style="top:845.00px;height:18px;line-height:18px;font-size:14px;color:#1c2335;-webkit-text-stroke:0.35px;left:Nonepx;left:1257px;width:25px;text-align:center;">O</span>
<!-- IME toolbar overlay -->
<div class="a" style="left:1650px;top:320px;width:212px;height:26px;background:#fff;border:1px dotted #a6d2f7;border-radius:2px;"></div>
<svg style="left:1635px;top:316px" width="34" height="31" viewBox="0 0 34 31"><defs><linearGradient id="sg" x1="0" y1="0" x2="0.25" y2="1"><stop offset="0" stop-color="#cb6a2a"/><stop offset="0.55" stop-color="#d2542a"/><stop offset="1" stop-color="#d23a26"/></linearGradient></defs><path d="M4.2 5.2 L24.6 1.4 Q26.6 1.1 27.2 3 L32.4 24 Q32.8 26 30.9 26.5 L10 30 Q7.8 30.3 7.2 28.2 L1.6 8.4 Q1.1 5.8 4.2 5.2 Z" fill="url(#sg)"/><path d="M25.2 8.4 C20.5 6.6 9.8 7.2 6.4 11.6 C3.6 15.4 8 17.6 14.6 17.2 C20.2 16.9 26.8 16.8 26.4 20.2 C26 23.6 14.6 25.2 8.6 23.6" fill="none" stroke="#fff" stroke-width="3.1" stroke-linecap="butt"/></svg>
<span class="t" style="left:1673.7px;top:323.4px;height:20px;line-height:20px;font-size:14.5px;font-weight:700;color:#0a6fe8;-webkit-text-stroke:0.4px;">中</span>
<svg style="left:1698px;top:325px" width="16" height="16" viewBox="0 0 16 16"><circle cx="4.3" cy="5.5" r="1.7" fill="none" stroke="#0a6fe8" stroke-width="1.3"/><path d="M10 7.6 Q13.2 7.4 12.8 10.6 Q12.2 13.4 9.4 14.4 Q11 12.6 10.6 11.2 Q8.8 10.6 10 7.6 Z" fill="#0a6fe8"/></svg>
<svg style="left:1722px;top:326px" width="15" height="15" viewBox="0 0 15 15"><circle cx="7.5" cy="7.5" r="7.4" fill="#0a6fe8"/><rect x="4.2" y="4.2" width="1.9" height="2.4" fill="#fff"/><rect x="8.9" y="4.2" width="1.9" height="2.4" fill="#fff"/><path d="M3.3 8.3 H11.7 Q11.2 12.3 7.5 12.3 Q3.8 12.3 3.3 8.3 Z" fill="#fff"/></svg>
<svg style="left:1746px;top:325px" width="13" height="16" viewBox="0 0 13 16"><rect x="4" y="0.3" width="5" height="9.4" rx="2.5" fill="#0a6fe8"/><path d="M1.4 6.4 V7.2 Q1.4 12 6.5 12 Q11.6 12 11.6 7.2 V6.4" fill="none" stroke="#0a6fe8" stroke-width="1.5" stroke-linecap="round"/><path d="M6.5 12 V14.6 M4.4 14.9 H8.6" stroke="#0a6fe8" stroke-width="1.4" stroke-linecap="round"/></svg>
<svg style="left:1770px;top:327px" width="15" height="12" viewBox="0 0 15 12"><rect x="0" y="0" width="15" height="11.6" rx="1.6" fill="#0a6fe8"/><g fill="#fff"><rect x="2" y="2.2" width="1.7" height="1.7"/><rect x="4.9" y="2.2" width="1.7" height="1.7"/><rect x="7.8" y="2.2" width="1.7" height="1.7"/><rect x="10.9" y="2.2" width="1.9" height="1.7"/><rect x="2" y="5" width="1.7" height="1.7"/><rect x="4.9" y="5" width="1.7" height="1.7"/><rect x="7.8" y="5" width="1.7" height="1.7"/><rect x="10.9" y="5" width="1.9" height="1.7"/><rect x="3" y="8" width="9" height="1.6"/></g></svg>
<svg style="left:1794px;top:325px" width="17" height="16" viewBox="0 0 17 16"><circle cx="6.6" cy="4" r="3.6" fill="#cbcbcb"/><path d="M0.6 15 Q0.6 8.6 6.6 8.6 Q10 8.6 11.4 10.4 H15.8 L13.6 15 Z" fill="#cfcfcf"/><path d="M7.4 11 H9 V14.6 M10.6 11 H13.8 L11.8 14.8" fill="none" stroke="#fff" stroke-width="1"/></svg>
<svg style="left:1817px;top:326px" width="17" height="15" viewBox="0 0 17 15"><path d="M5.2 0.6 Q8.5 2.6 11.8 0.6 L16.6 3 L15 6.6 L13.2 6 V14 H3.8 V6 L2 6.6 L0.4 3 Z" fill="#0a6fe8"/></svg>
<svg style="left:1842px;top:326px" width="15" height="15" viewBox="0 0 15 15"><g fill="#0a6fe8"><rect x="0.4" y="0.6" width="6" height="6" rx="1.5"/><rect x="7.9" y="0.6" width="6" height="6" rx="1.5"/><rect x="0.4" y="8" width="6" height="6" rx="1.5"/><rect x="7.9" y="8" width="6" height="6" rx="1.5"/></g><circle cx="10.9" cy="3.6" r="1.2" fill="#fff"/></svg>

</div>
</body>
</html>
